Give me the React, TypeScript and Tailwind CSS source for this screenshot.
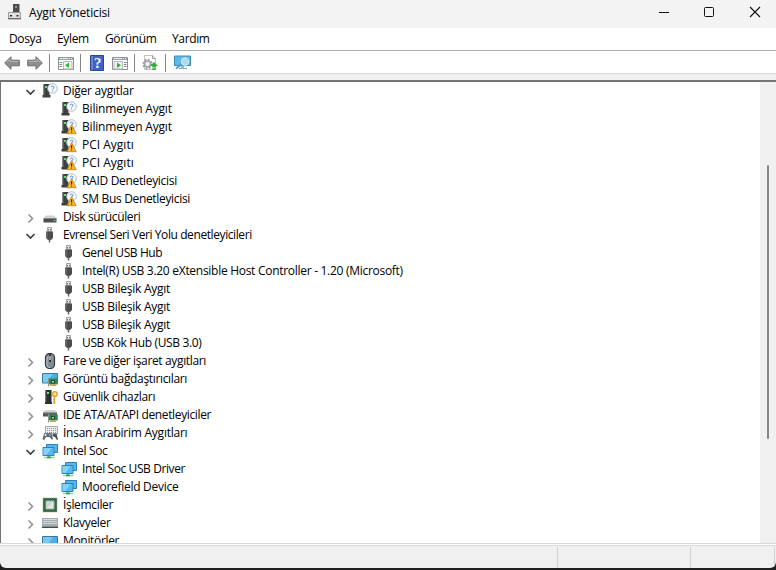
import type { ReactNode } from 'react'

type IconName =
  | 'unknown'
  | 'warning'
  | 'disk'
  | 'usb'
  | 'mouse'
  | 'display'
  | 'security'
  | 'ide'
  | 'hid'
  | 'network'
  | 'cpu'
  | 'keyboard'
  | 'monitor'

interface TreeRow {
  label: string
  icon: IconName
  level: 1 | 2
  open?: boolean
  tracking?: string
}

const rows: TreeRow[] = [
  { label: 'Diğer aygıtlar', icon: 'unknown', level: 1, open: true },
  { label: 'Bilinmeyen Aygıt', icon: 'unknown', level: 2, tracking: 'tracking-[-0.18px]' },
  { label: 'Bilinmeyen Aygıt', icon: 'warning', level: 2, tracking: 'tracking-[-0.18px]' },
  { label: 'PCI Aygıtı', icon: 'warning', level: 2, tracking: 'tracking-[0px]' },
  { label: 'PCI Aygıtı', icon: 'warning', level: 2, tracking: 'tracking-[0px]' },
  { label: 'RAID Denetleyicisi', icon: 'warning', level: 2, tracking: 'tracking-[-0.3px]' },
  { label: 'SM Bus Denetleyicisi', icon: 'warning', level: 2, tracking: 'tracking-[-0.33px]' },
  { label: 'Disk sürücüleri', icon: 'disk', level: 1, tracking: 'tracking-[-0.38px]' },
  { label: 'Evrensel Seri Veri Yolu denetleyicileri', icon: 'usb', level: 1, open: true, tracking: 'tracking-[-0.41px]' },
  { label: 'Genel USB Hub', icon: 'usb', level: 2, tracking: 'tracking-[-0.4px]' },
  { label: 'Intel(R) USB 3.20 eXtensible Host Controller - 1.20 (Microsoft)', icon: 'usb', level: 2, tracking: 'tracking-[-0.285px]' },
  { label: 'USB Bileşik Aygıt', icon: 'usb', level: 2 },
  { label: 'USB Bileşik Aygıt', icon: 'usb', level: 2 },
  { label: 'USB Bileşik Aygıt', icon: 'usb', level: 2 },
  { label: 'USB Kök Hub (USB 3.0)', icon: 'usb', level: 2, tracking: 'tracking-[-0.36px]' },
  { label: 'Fare ve diğer işaret aygıtları', icon: 'mouse', level: 1, tracking: 'tracking-[-0.36px]' },
  { label: 'Görüntü bağdaştırıcıları', icon: 'display', level: 1, tracking: 'tracking-[-0.34px]' },
  { label: 'Güvenlik cihazları', icon: 'security', level: 1, tracking: 'tracking-[-0.31px]' },
  { label: 'IDE ATA/ATAPI denetleyiciler', icon: 'ide', level: 1, tracking: 'tracking-[-0.36px]' },
  { label: 'İnsan Arabirim Aygıtları', icon: 'hid', level: 1 },
  { label: 'Intel Soc', icon: 'network', level: 1, open: true, tracking: 'tracking-[-0.33px]' },
  { label: 'Intel Soc USB Driver', icon: 'network', level: 2, tracking: 'tracking-[-0.4px]' },
  { label: 'Moorefield Device', icon: 'network', level: 2, tracking: 'tracking-[-0.28px]' },
  { label: 'İşlemciler', icon: 'cpu', level: 1, tracking: 'tracking-[-0.33px]' },
  { label: 'Klavyeler', icon: 'keyboard', level: 1, tracking: 'tracking-[-0.33px]' },
  { label: 'Monitörler', icon: 'monitor', level: 1, tracking: 'tracking-[-0.33px]' },
]

function Tower() {
  return (
    <>
      <path d="M1.5 1h6v11h1v2.5h-8V12h1z" fill="#3c403e" />
      <path d="M1.5 1h1v11h-1z" fill="#6c706e" />
      <path d="M3 3h2v2H3z" fill="#5fe070" />
    </>
  )
}

function QuestionBadge() {
  return (
    <>
      <circle cx="10.5" cy="5.500" r="4.8" fill="#f7fafc" stroke="#a9b6bf" strokeWidth=".9" />
      <path d="M9.1 4.400c0-1.8 3-1.7 3 0 0 1-1.5 1.100-1.500 2.100M10.600 7.500v1" fill="none" stroke="#4a92c8" strokeWidth="1" />
    </>
  )
}

function Board() {
  return (
    <>
      <path d="M6.5 7.5h9.200v6H7v1h-.5z" fill="#2c8a52" />
      <path d="M6.500 7v8.500" stroke="#8b9691" />
      <path d="M8 13.500h6V15H8z" fill="#c8a848" />
      <path d="M9 9h4v3.500H9z" fill="#1d4f35" />
      <path d="M10 10h2v1.500h-2z" fill="#a9d9b8" />
    </>
  )
}

const icons: Record<IconName, ReactNode> = {
  unknown: (
    <>
      <Tower />
      <QuestionBadge />
    </>
  ),
  warning: (
    <>
      <Tower />
      <QuestionBadge />
      <path d="m10.600 5.500 4.600 9.200H6z" fill="#fbb62c" stroke="#c07f10" strokeWidth=".8" strokeLinejoin="round" />
      <path d="M10.600 8.300v3.200M10.600 12.400v1.200" stroke="#292011" strokeWidth="1.100" />
    </>
  ),
  disk: (
    <>
      <path d="m4 6.500-2.500 3h13l-2.500-3z" fill="#cfd1d2" />
      <path d="M1.500 9.500h13V13.500h-13z" fill="#4b4e50" />
      <path d="M1.500 9.500h13" stroke="#85898b" />
      <path d="M11.500 11.500h2" stroke="#5bed72" />
    </>
  ),
  usb: (
    <>
      <path d="M5.500.5h4v4h-4z" fill="#e5e5e5" stroke="#a2a2a2" />
      <path d="M6.500 2v1.500M8.500 2v1.500" stroke="#777" />
      <path d="M4 4.500h7V11l-2 2H6l-2-2z" fill="#4b4d4f" />
      <path d="M5 5v6" stroke="#7d8082" />
      <path d="M7.500 12v3.500" stroke="#606264" strokeWidth="1.500" />
    </>
  ),
  mouse: (
    <>
      <rect x="3.500" y=".5" width="9" height="15" rx="4" fill="#838d98" stroke="#34383d" strokeWidth="1.200" />
      <path d="M5 3.500v8c0 2 1 3 3 3" fill="none" stroke="#b7c2cd" />
      <path d="M8 1v8" stroke="#30353b" strokeWidth="2" />
      <path d="M8 3v4" stroke="#f3f6f8" strokeWidth="1.200" />
    </>
  ),
  display: (
    <>
      <path d="M.5 2.500h15v9.500H.5z" fill="#4aaee9" stroke="#3b789e" />
      <path d="M1 3h10l-6 8.500H1z" fill="#78cdf5" />
      <Board />
    </>
  ),
  security: (
    <>
      <path d="M3.500 1h6v12h.500v2H3v-2h.500z" fill="#2b2e2e" />
      <path d="M3.500 1h1v12h-1z" fill="#555a5a" />
      <path d="M5 3h2v2H5z" fill="#59ef79" />
      <circle cx="12.800" cy="5" r="2.400" fill="#f7e3a0" stroke="#d9a238" strokeWidth="1.400" />
      <path d="M12.500 7v8M12.500 10.500H11M12.500 13H11" stroke="#d9a238" strokeWidth="1.500" />
    </>
  ),
  ide: (
    <>
      <path d="m3.500 3-2.500 2.500h14L12.500 3z" fill="#cfd1d2" />
      <path d="M1 5.500h14V9.500H1z" fill="#535759" />
      <path d="M1 5.800h14" stroke="#929699" />
      <Board />
    </>
  ),
  hid: (
    <>
      <path d="M3.500 1.500h12v7h-12z" fill="#eceeef" stroke="#a3a8ab" />
      <path d="M5 3.500h9M5 5.500h9M5 7.500h9" stroke="#8f959a" strokeDasharray="1 1" />
      <path d="M.500 14.500 2 8.500l1.500-1L5 8.500h1.500l1.500-1 1.500 1L11 14l-1 .800L7.500 12H4.200L2 15z" fill="#5d656c" />
      <path d="m10 10 2-1.500 1 .500 1.500-.500 1.500 6-1 .500-2-3h-1z" fill="#4a5259" />
      <path d="M2.300 10h2.500M3.500 8.800v2.500" stroke="#e5eaec" />
      <path d="M7 10h1.500" stroke="#8cc8f4" strokeWidth="1.500" />
    </>
  ),
  network: (
    <>
      <path d="M4.500 1.500h11v8h-11z" fill="#54b7ef" stroke="#2f82b0" />
      <path d="M1 4.500h11v8H1z" fill="#55baf3" stroke="#2f82b0" />
      <path d="M1.500 5h8l-5 7h-3z" fill="#84d2fa" />
      <path d="M5.500 13h2.500v1H5.500z" fill="#42b961" />
      <path d="M2 14.500h10.500" stroke="#8fd79c" strokeWidth="1.500" />
      <path d="M5 14.500h4" stroke="#3a9c55" strokeWidth="1.500" />
    </>
  ),
  cpu: (
    <>
      <path d="M1 1h14v14H1z" fill="#2f6a4b" />
      <rect x=".9" y=".9" width="14.200" height="14.200" fill="none" stroke="#c2b06a" strokeWidth="1" strokeDasharray="1 1" />
      <path d="M4 4h8v8H4z" fill="#e4e8e5" stroke="#9fb0a6" />
      <path d="m5 5h6l-6 6z" fill="#cdd5d0" />
    </>
  ),
  keyboard: (
    <>
      <path d="M0 3h16v8.500H0z" fill="#a7abb0" />
      <path d="M0 11.500h16V13H0z" fill="#45494c" />
      <path d="M1.500 4.500h13M1.500 6.500h13M1.500 8.500h13" stroke="#edf0f2" strokeDasharray="1.300 .7" />
    </>
  ),
  monitor: (
    <>
      <path d="M.5 3.500h15v10H.5z" fill="#4cadea" stroke="#3c7594" />
      <path d="M1 4h10l-6 9H1z" fill="#76caef" />
    </>
  ),
}

function Chevron({ open }: { open?: boolean }) {
  return (
    <svg className="size-4 shrink-0" viewBox="0 0 16 16" fill="none">
      {open ? (
        <path d="m4.500 7 4 4 4-4" stroke="#3b3b3b" strokeWidth="1.600" />
      ) : (
        <path d="m6.500 5.500 4 4-4 4" stroke="#8e8e8e" strokeWidth="1.500" />
      )}
    </svg>
  )
}

function TreeItem({ label, icon, level, open, tracking = 'tracking-[-0.25px]' }: TreeRow) {
  return (
    <div className={level === 1 ? 'flex h-[18px] shrink-0 items-center pl-[21px]' : 'flex h-[18px] shrink-0 items-center pl-[60px]'}>
      {level === 1 && <Chevron open={open} />}
      <svg className={level === 1 ? 'ml-1 size-4 shrink-0' : 'size-4 shrink-0'} viewBox="0 0 16 16">
        {icons[icon]}
      </svg>
      <span className={`ml-[5px] whitespace-nowrap leading-[18px] ${tracking}`}>{label}</span>
    </div>
  )
}

function Separator() {
  return <div className="h-[18px] w-px bg-[#858585]" />
}

function Arrow({ flip }: { flip?: boolean }) {
  return (
    <svg className={flip ? 'ml-[7px] h-4 w-4 -scale-x-100' : 'h-4 w-4'} viewBox="0 0 16 16">
      <path d="M.7 8 7 1.700v3.500h8.300v5.600H7v3.500z" fill="#8e8e8e" stroke="#6a6a6a" strokeLinejoin="round" />
      <path d="M2.500 7.500 6 4.200v2.200h8.500" fill="none" stroke="#b8b8b8" />
    </svg>
  )
}

function PaneIcon({ flip }: { flip?: boolean }) {
  return (
    <svg className="h-4 w-4" viewBox="0 0 16 16">
      <path d="M.5 2.500h15v12H.5z" fill="#fff" stroke="#8c9296" />
      <path d="M1 2.500h14V5H1z" fill="#98a0a5" />
      <path d="M2 3.500h8M11 3.500h1M13 3.500h1" stroke="#e8ebed" />
      {flip ? (
        <>
          <path d="M2 6.500h8.500v7.500H2z" fill="#f2f6f1" stroke="#b4b8ba" />
          <path d="M12 7.500h2.500M12 9.500h2.500M12 11.500h2.500" stroke="#7b8287" />
          <path d="m5 7.500 4 2.800-4 2.800z" fill="#3cad37" />
        </>
      ) : (
        <>
          <path d="M5.500 6.500H14V14H5.500z" fill="#f2f6f1" stroke="#b4b8ba" />
          <path d="M1.500 7.500H4M1.500 9.500H4M1.500 11.500H4" stroke="#7b8287" />
          <path d="m11 7.500-4 2.800 4 2.800z" fill="#3cad37" />
        </>
      )}
    </svg>
  )
}

function Toolbar() {
  return (
    <div className="flex h-[23px] shrink-0 items-center border-b border-[#d7d7d7] bg-white pl-1 pt-[2px]">
      <Arrow />
      <Arrow flip />
      <div className="ml-[6px] flex items-center">
        <Separator />
        <div className="pl-2 pr-[6px]">
          <PaneIcon />
        </div>
        <Separator />
        <svg className="ml-[9px] h-4 w-[14px]" viewBox="0 0 14 16">
          <path d="M.5.5h13v15H.5z" fill="#3f62c4" stroke="#2c478f" />
          <path d="M1 1h2v14H1z" fill="#6682d0" />
          <text x="7.800" y="13" textAnchor="middle" fill="#fff" className="font-['Liberation_Serif',serif] text-[15px] font-bold">?</text>
        </svg>
        <div className="pl-2 pr-[6px]">
          <PaneIcon flip />
        </div>
        <Separator />
        <svg className="mx-[7px] h-4 w-4" viewBox="0 0 16 16">
          <path d="M2.500.5h8l3 3v11h-11z" fill="#fff" stroke="#c2c2c2" />
          <path d="M10.500.5v3h3" fill="#eee" stroke="#999" />
          <circle cx="5.500" cy="9" r="4.300" fill="none" stroke="#8f8f8f" strokeWidth="1.600" strokeDasharray="1.700 1.680" />
          <circle cx="5.500" cy="9" r="3" fill="#f4f4f4" stroke="#a0a0a0" strokeWidth="1.600" />
          <path d="m12 7 4 4h-2.300v1.500h-3.400V11H8zM10.300 13.200h3.400V15h-3.400z" fill="#2fae40" />
        </svg>
        <Separator />
        <svg className="ml-[8px] h-4 w-[17px]" viewBox="0 0 17 16">
          <path d="M.5 1h16v9.500H.5z" fill="#5bb9ec" stroke="#3f8bb5" />
          <path d="M5 13.500h8" stroke="#7fa3b5" />
          <path d="M8.500 11v2.500" stroke="#9fb8c4" strokeWidth="3" />
          <circle cx="11" cy="6.500" r="3.900" fill="#a8dbf5" stroke="#e2f2fa" strokeWidth="1.200" />
          <circle cx="11" cy="6.500" r="4.500" fill="none" stroke="#4f8cad" strokeWidth=".5" />
          <path d="m7.500 9.500-5.500 4" stroke="#4d9bc8" strokeWidth="1.800" />
        </svg>
      </div>
    </div>
  )
}

function TitleBar() {
  return (
    <div className="flex h-7 shrink-0 items-center bg-[#f3f3f3] pl-[7px]">
      <svg className="-mt-1 h-4 w-[15px]" viewBox="0 0 15 16">
        <path d="M6 0h6.500v8.500H6z" fill="#4a4c4d" />
        <path d="M8 2h2v2H8z" fill="#929595" />
        <path d="M1.500 8.500h12v6h-12z" fill="#e1e1e1" stroke="#9a9a9a" />
        <path d="M1 14.800h13" stroke="#555" />
        <path d="M3 11h2v1.500H3zM9.500 11h2v1.500h-2z" fill="#222" />
      </svg>
      <span className="ml-[7px] pb-[2px] tracking-[-0.15px]">Aygıt Yöneticisi</span>
      <svg className="ml-auto h-7 w-[125px]" viewBox="0 0 125 28" fill="none" stroke="#111">
        <path d="M8 12.500h10" />
        <rect x="53.500" y="7.500" width="9" height="9" rx="1" />
        <path d="m99 7 10 10M109 7l-10 10" strokeWidth="1.100" />
      </svg>
    </div>
  )
}

export default function App() {
  return (
    <div className="h-[570px] w-[776px] overflow-hidden bg-[#202020] font-['Open_Sans','Noto_Sans',sans-serif] text-[12px] text-black">
      <div className="flex h-[568px] flex-col overflow-hidden rounded-b-[6px] bg-[#f0f0f0]">
        <TitleBar />
        <div className="flex h-[23px] shrink-0 items-center border-b border-[#acacac] bg-white pl-[9px] tracking-[-0.36px]">
          <span className="w-12">Dosya</span>
          <span className="w-12">Eylem</span>
          <span className="w-[67px]">Görünüm</span>
          <span>Yardım</span>
        </div>
        <Toolbar />
        <div className="h-[6px] shrink-0 bg-[#f0f0f0]" />
        <div className="flex h-[463px] shrink-0 border-l border-t-2 border-[#747474] bg-white">
          <div className="flex flex-1 flex-col overflow-hidden">
            {rows.map((row, i) => (
              <TreeItem key={i} {...row} />
            ))}
          </div>
          <div className="w-4 bg-[#f0f0f0] pl-[7px] pt-[83px]">
            <div className="h-[274px] w-[2px] rounded-full bg-[#858585]" />
          </div>
        </div>
        <div className="h-[3px] shrink-0 border-y border-[#d8d8d8] bg-white" />
        <div className="flex flex-1 pt-px">
          <div className="w-[558px] border-r border-[#d0d0d0]" />
          <div className="w-[133px] border-r border-[#d0d0d0]" />
          <div className="w-[84px] border-r border-[#d0d0d0]" />
        </div>
      </div>
    </div>
  )
}
